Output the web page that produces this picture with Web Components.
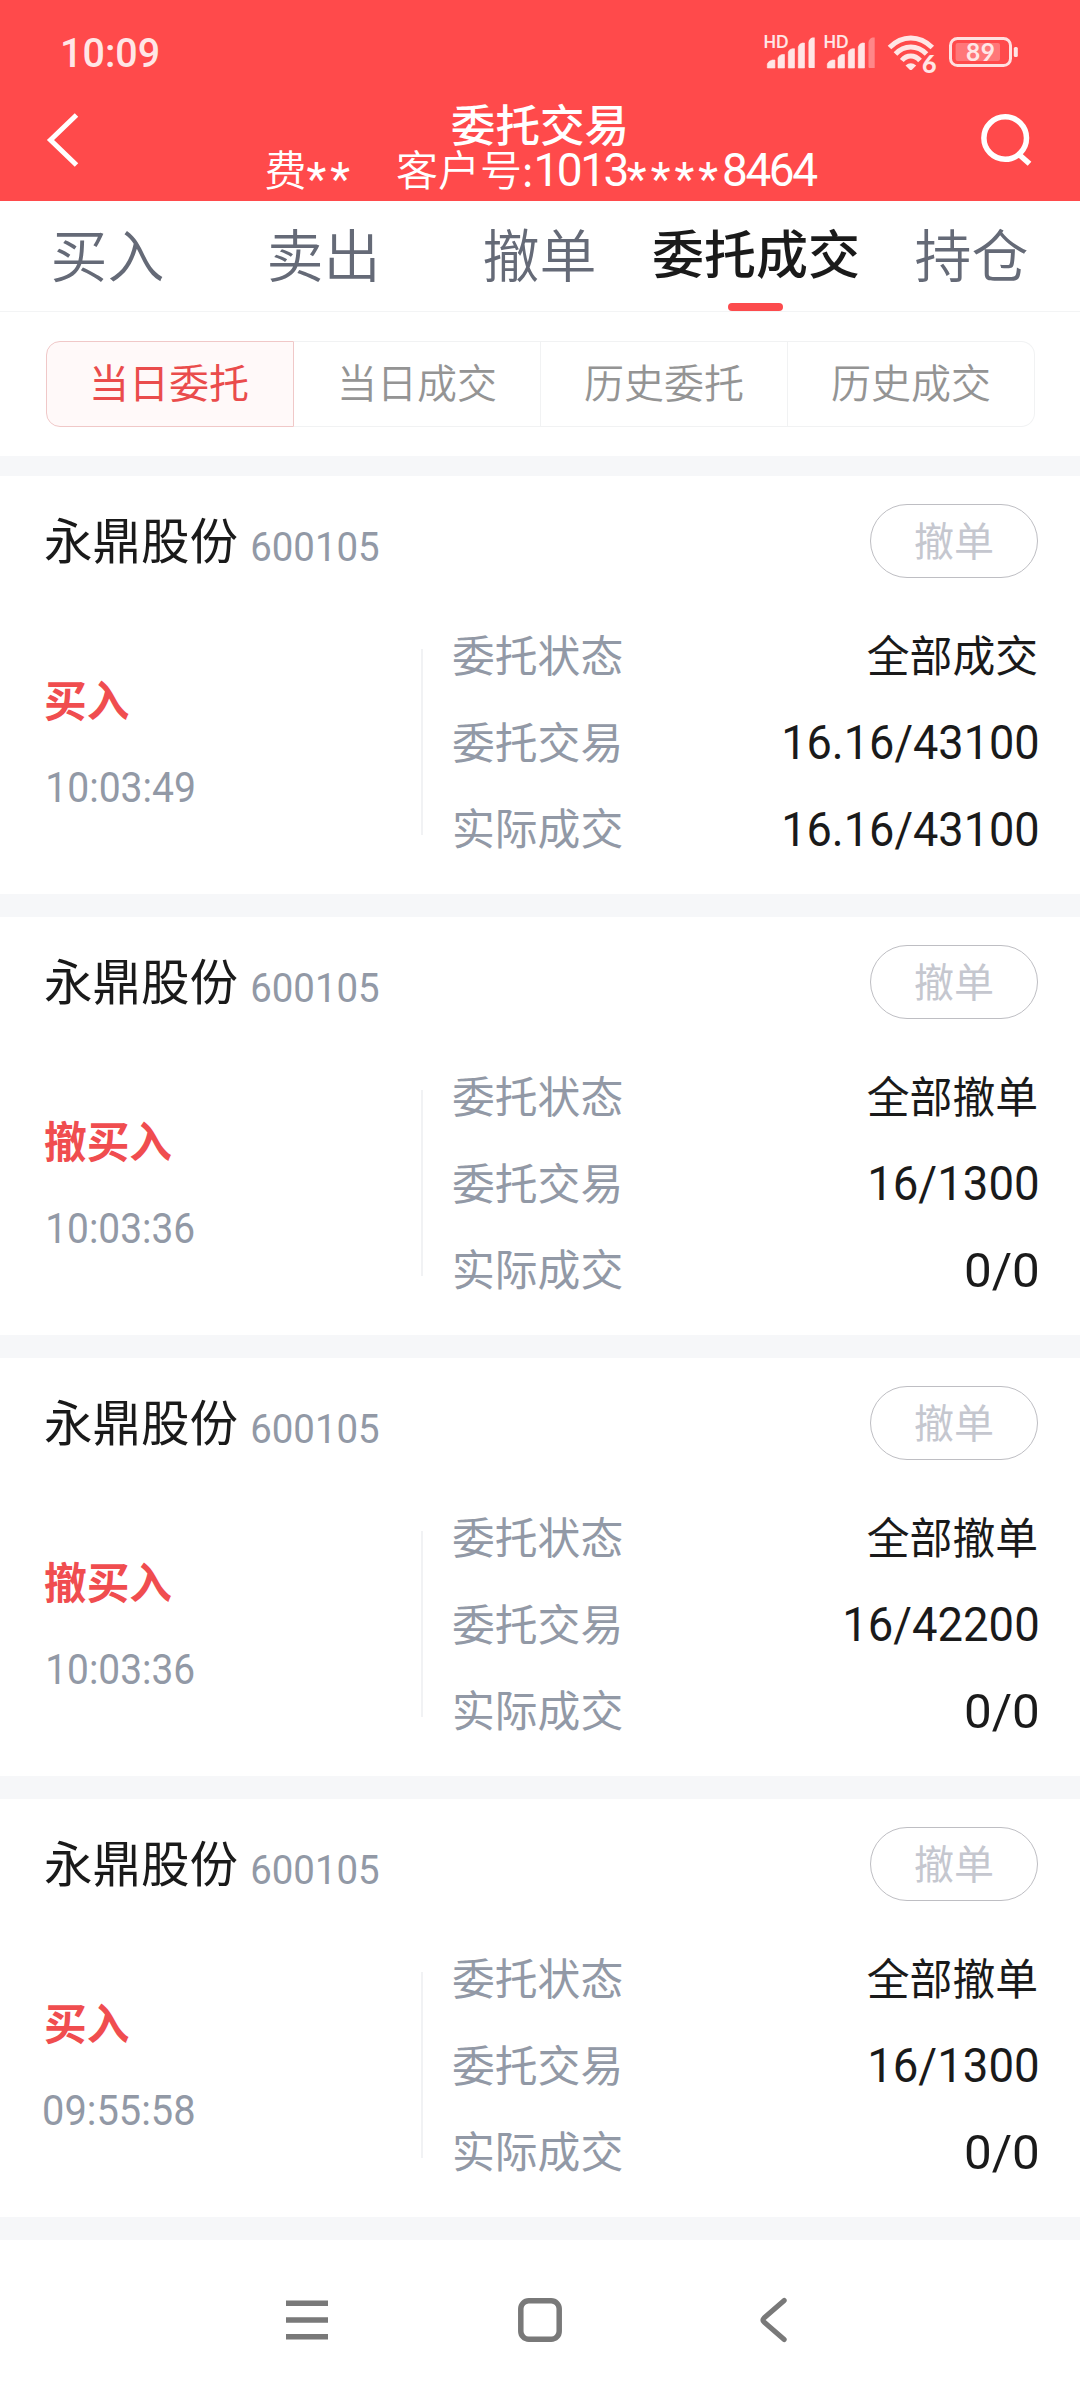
<!DOCTYPE html>
<html lang="zh-CN">
<head>
<meta charset="utf-8">
<title>委托交易</title>
<style>
html,body{margin:0;padding:0;background:#fff}
body{width:1080px;height:2400px;overflow:hidden;font-family:Roboto,"Noto Sans CJK SC",sans-serif}
</style>
</head>
<body>
<trade-app></trade-app>
<script>
const CJK = '"Noto Sans CJK SC",sans-serif';
const define = (name, html, setup) => customElements.define(name, class extends HTMLElement {
  connectedCallback() {
    if (this.shadowRoot) return;
    const t = document.createElement('template');
    t.innerHTML = typeof html === 'function' ? html(this) : html;
    this.attachShadow({ mode: 'open' }).append(t.content.cloneNode(true));
    if (setup) setup(this);
  }
});

/* Figures set to an exact ink box: w wide, h high. */
const ctx = document.createElement('canvas').getContext('2d');
define('din-figures', el => {
  const w = +el.getAttribute('w'), h = +el.getAttribute('h'), weight = el.getAttribute('weight') || 400;
  const text = el.getAttribute('text'), fs = h / 0.735;
  ctx.font = `${weight} ${fs}px Roboto`;
  const m = ctx.measureText(text);
  const s = w / (m.actualBoundingBoxRight + m.actualBoundingBoxLeft);
  return `<style>
    :host{display:block;width:${w}px;height:${h}px;flex:none}
    span{display:block;width:max-content;white-space:pre;font:${weight} ${fs}px/${h}px Roboto,sans-serif;
      transform-origin:0 0;transform:scaleX(${s}) translate(${m.actualBoundingBoxLeft}px,.6px)}
  </style><span>${text}</span>`;
});

define('status-bar', `<style>
  :host{display:flex;justify-content:space-between;height:100px;box-sizing:border-box;padding:37px 60px 0 63px}
  din-figures{color:#ffe6e6}
  svg{display:block;margin-top:-7px}
  text{font-family:Lato,Roboto,sans-serif}
</style>
<din-figures text="10:09" w="95" h="30" weight="500"></din-figures>
<svg width="258" height="48" viewBox="762 30 258 48" fill="#ffe6e6">
  <g id="sim"><text x="763.5" y="48" font-size="16.5" font-weight="700" textLength="25" lengthAdjust="spacingAndGlyphs">HD</text>
  <path d="M767.3 68V64q1-3 5-4h2.6v8zM778 68V58q1-3 4-3.500h2.500V68zM788.300 68V52q1-3 4-3.300h2.200V68zM798.300 68V47q1-3.500 4-4h2.200v25z" stroke="#ffe6e6" stroke-width=".6" stroke-linejoin="round"/></g>
  <path d="M808.500 67V42q1-4 4-4.500h2.200V68h-5.200q-1 0-1-1z"/>
  <g transform="translate(60 0)"><text x="763.5" y="48" font-size="16.5" font-weight="700" textLength="25" lengthAdjust="spacingAndGlyphs">HD</text>
  <path d="M767.3 68V64q1-3 5-4h2.600v8zM778 68V58q1-3 4-3.500h2.500V68zM788.300 68V52q1-3 4-3.300h2.200V68zM798.300 68V47q1-3.500 4-4h2.200v25z" stroke="#ffe6e6" stroke-width=".6" stroke-linejoin="round"/>
  <path d="M808.500 67V42q1-4 4-4.500h2.200V68h-5.200q-1 0-1-1z" fill="#ff8688"/></g>
  <g fill="none" stroke="#ffe6e6" stroke-width="5"><path d="M889.500 47.500Q899 38 910.800 38T932.300 47.500"/><path d="M895.500 54Q902 47 910.800 47T926.500 54"/><path d="M901.800 60.500Q905.500 56 910.800 56T920 60.500"/></g>
  <path d="M905.500 65.500q5.300-4.500 10.700 0l-4 4q-1.400 1-2.700 0z"/>
  <text x="922" y="72.800" font-size="25" font-weight="900">6</text>
  <rect x="950.500" y="38.500" width="60" height="27" rx="7" fill="none" stroke="#ffe0e0" stroke-width="3"/>
  <rect x="955.600" y="43" width="44.400" height="18" rx="2" fill="#ff7779"/>
  <text x="966" y="61.300" font-size="24.500" font-weight="700" textLength="29">89</text>
  <rect x="1013.800" y="47" width="4" height="10" rx="1.500"/>
</svg>`);

define('title-bar', `<style>
  :host{display:flex;justify-content:space-between;height:100.500px;padding:0 46px 0 45px;box-sizing:border-box;color:#fff;font-family:${CJK}}
  svg{display:block;margin-top:8px;flex:none}
  .mid{display:flex;flex-direction:column;align-items:center;white-space:pre;margin-left:17px}
  .t{font-size:44.600px;line-height:44px;font-weight:500;margin-top:1px}
  .s{display:flex;font-size:42px;line-height:42px;margin-top:2px;font-weight:350;color:#fff}
  .s span{display:block}
  .n{font-family:Roboto,sans-serif;font-size:46px;letter-spacing:-2.500px;font-weight:400;padding-top:2px}
  .n i{font-style:normal;position:relative;top:9px;letter-spacing:4px}
</style>
<svg width="40" height="64" viewBox="45 108 40 64"><path d="M76.500 115L50.500 140l26 25" fill="none" stroke="#fff" stroke-width="5"/></svg>
<div class="mid"><div class="t">委托交易</div>
<div class="s"><span>费</span><span class="n"><i>**</i></span><span style="margin-left:42px">客户号:</span><span class="n">1013<i>****</i>8464</span></div></div>
<svg width="56" height="64" viewBox="978 108 56 64" fill="none" stroke="#fff"><circle cx="1005.200" cy="138" r="21.300" stroke-width="5.500"/><path d="M1018.500 154l11 9.800" stroke-width="5.500"/></svg>`);

define('tab-item', el => `<style>
  :host{display:flex;flex-direction:column;align-items:center;flex:1 0 0;height:110px;font:350 57px/110px ${CJK};color:#656a77;white-space:nowrap}
  :host([active]){font-weight:500;font-size:52px;color:#1a1a1a}
  .l{height:102px;line-height:103px;margin-left:-1px}
  :host([active]) .l{line-height:102px;margin-left:0}
  i{display:none;width:55px;height:8px;border-radius:4px;background:#fc4b4d;margin-right:2px}
  :host([active]) i{display:block}
</style><span class="l"><slot></slot></span><i></i>`);

define('tab-bar', `<style>:host{display:flex;height:110px;border-bottom:1px solid #f3f4f5;background:#fff}</style><slot></slot>`);

define('seg-item', `<style>
  :host{display:block;box-sizing:border-box;flex:1 0 0;border:1px solid #f1f2f3;border-left-width:0;text-align:center;font:350 40px/79px ${CJK};color:#949494}
  :host(:last-child){border-radius:0 14px 14px 0}
  :host([active]){border:1px solid #f0c8c8;border-radius:14px 0 0 14px;background:#fff9f9;color:#ea4c4c;text-indent:-2px;font-weight:400}
</style><slot></slot>`);
define('seg-control', `<style>:host{display:flex;height:86px;margin:29px 45px 29px 46px;background:#fff}</style><slot></slot>`);

define('order-row', `<style>
  :host{display:flex;justify-content:space-between;align-items:center;height:86.500px;font:400 42.800px/60px ${CJK};color:#9299a6}
  .v{color:#1a1a1a;display:block}
  ::slotted(din-figures){margin-top:6px}
</style><slot></slot><span class="v"><slot name="value"></slot></span>`);

/* Ink widths of the figures, by text. */
const W = { '16.16/43100': 254, '16/1300': 168, '16/42200': 193, '0/0': 72 };
const figures = t => `<din-figures slot="value" text="${t}" w="${W[t]}" h="35"></din-figures>`;

define('order-card', el => {
  const a = n => el.getAttribute(n), time = a('time');
  const tw = time[0] === '0' ? 150 : 145.500;
  return `<style>
  :host{display:block;box-sizing:border-box;height:418px;background:#fff;padding:27px 42px 0 45px;font-family:${CJK}}
  .head{display:flex;height:75px;align-items:center}
  .name{font-size:48.500px;line-height:60px;color:#1a1a1a;margin:-5px 0 0 -1px;width:208px;white-space:nowrap}
  .code,.time{color:#9299a6}
  .code{margin-top:12px}
  .pill{margin:1px 0 0 auto;box-sizing:border-box;width:168px;height:74px;border:1px solid #bebec3;border-radius:38px;font-size:40px;line-height:69px;text-align:center;color:#c5c7cf}
  .body{display:flex;margin-top:32px}
  .side{box-sizing:border-box;width:376px;padding-top:58px}
  .op{font-size:42.700px;line-height:60px;font-weight:700;color:#f04d4f;margin-left:-1px}
  .time{margin:43px 0 0 ${time[0] === '0' ? -1 : 3}px}
  .rule{width:2px;height:186px;background:#f1f2f4;margin:39px 29px 0 0}
  .rows{flex:1}
  .rows order-row{width:100%}
  </style>
  <div class="head"><span class="name">永鼎股份</span><din-figures class="code" text="600105" w="126.500" h="30.500"></din-figures><span class="pill">撤单</span></div>
  <div class="body"><div class="side"><div class="op">${a('op')}</div><din-figures class="time" text="${time}" w="${tw}" h="31"></din-figures></div>
  <div class="rule"></div>
  <div class="rows"><order-row>委托状态<span slot="value">${a('state')}</span></order-row>
  <order-row>委托交易${figures(a('ordered'))}</order-row>
  <order-row>实际成交${figures(a('filled'))}</order-row></div></div>`;
});

define('nav-bar', `<style>:host{display:flex;height:160px;background:#fff;justify-content:space-between;align-items:center;padding:0 292px 0 285px}svg{display:block}.home{margin-right:7px}</style>
<svg width="44" height="46" viewBox="0 0 44 46" stroke="#797979" stroke-width="5.500"><path d="M1 6.300h42M1 23h42M1 39.700h42"/></svg>
<svg class="home" width="46" height="46" viewBox="0 0 46 46" fill="none" stroke="#797979" stroke-width="5.500"><rect x="3.800" y="3.800" width="38.400" height="38.400" rx="8"/></svg>
<svg width="30" height="46" viewBox="0 0 30 46" fill="none" stroke="#797979" stroke-width="5" stroke-linecap="round" stroke-linejoin="round"><path d="M26.200 3.500L6 21Q4 23 6 25L26.200 42.500"/></svg>`);

define('trade-app', `<style>
  :host{display:block;width:1080px;height:2400px;background:#fff}
  header{background:#ff4a4b;height:200.500px}
  main{display:flex;flex-direction:column;gap:23px;background:#f6f7f9;padding:20.500px 0 23px}
</style>
<header><status-bar></status-bar><title-bar></title-bar></header>
<tab-bar><tab-item>买入</tab-item><tab-item>卖出</tab-item><tab-item>撤单</tab-item><tab-item active>委托成交</tab-item><tab-item>持仓</tab-item></tab-bar>
<seg-control><seg-item active>当日委托</seg-item><seg-item>当日成交</seg-item><seg-item>历史委托</seg-item><seg-item>历史成交</seg-item></seg-control>
<main>
<order-card op="买入" time="10:03:49" state="全部成交" ordered="16.16/43100" filled="16.16/43100"></order-card>
<order-card op="撤买入" time="10:03:36" state="全部撤单" ordered="16/1300" filled="0/0"></order-card>
<order-card op="撤买入" time="10:03:36" state="全部撤单" ordered="16/42200" filled="0/0"></order-card>
<order-card op="买入" time="09:55:58" state="全部撤单" ordered="16/1300" filled="0/0"></order-card>
</main>
<nav-bar></nav-bar>`);
</script>
</body>
</html>
